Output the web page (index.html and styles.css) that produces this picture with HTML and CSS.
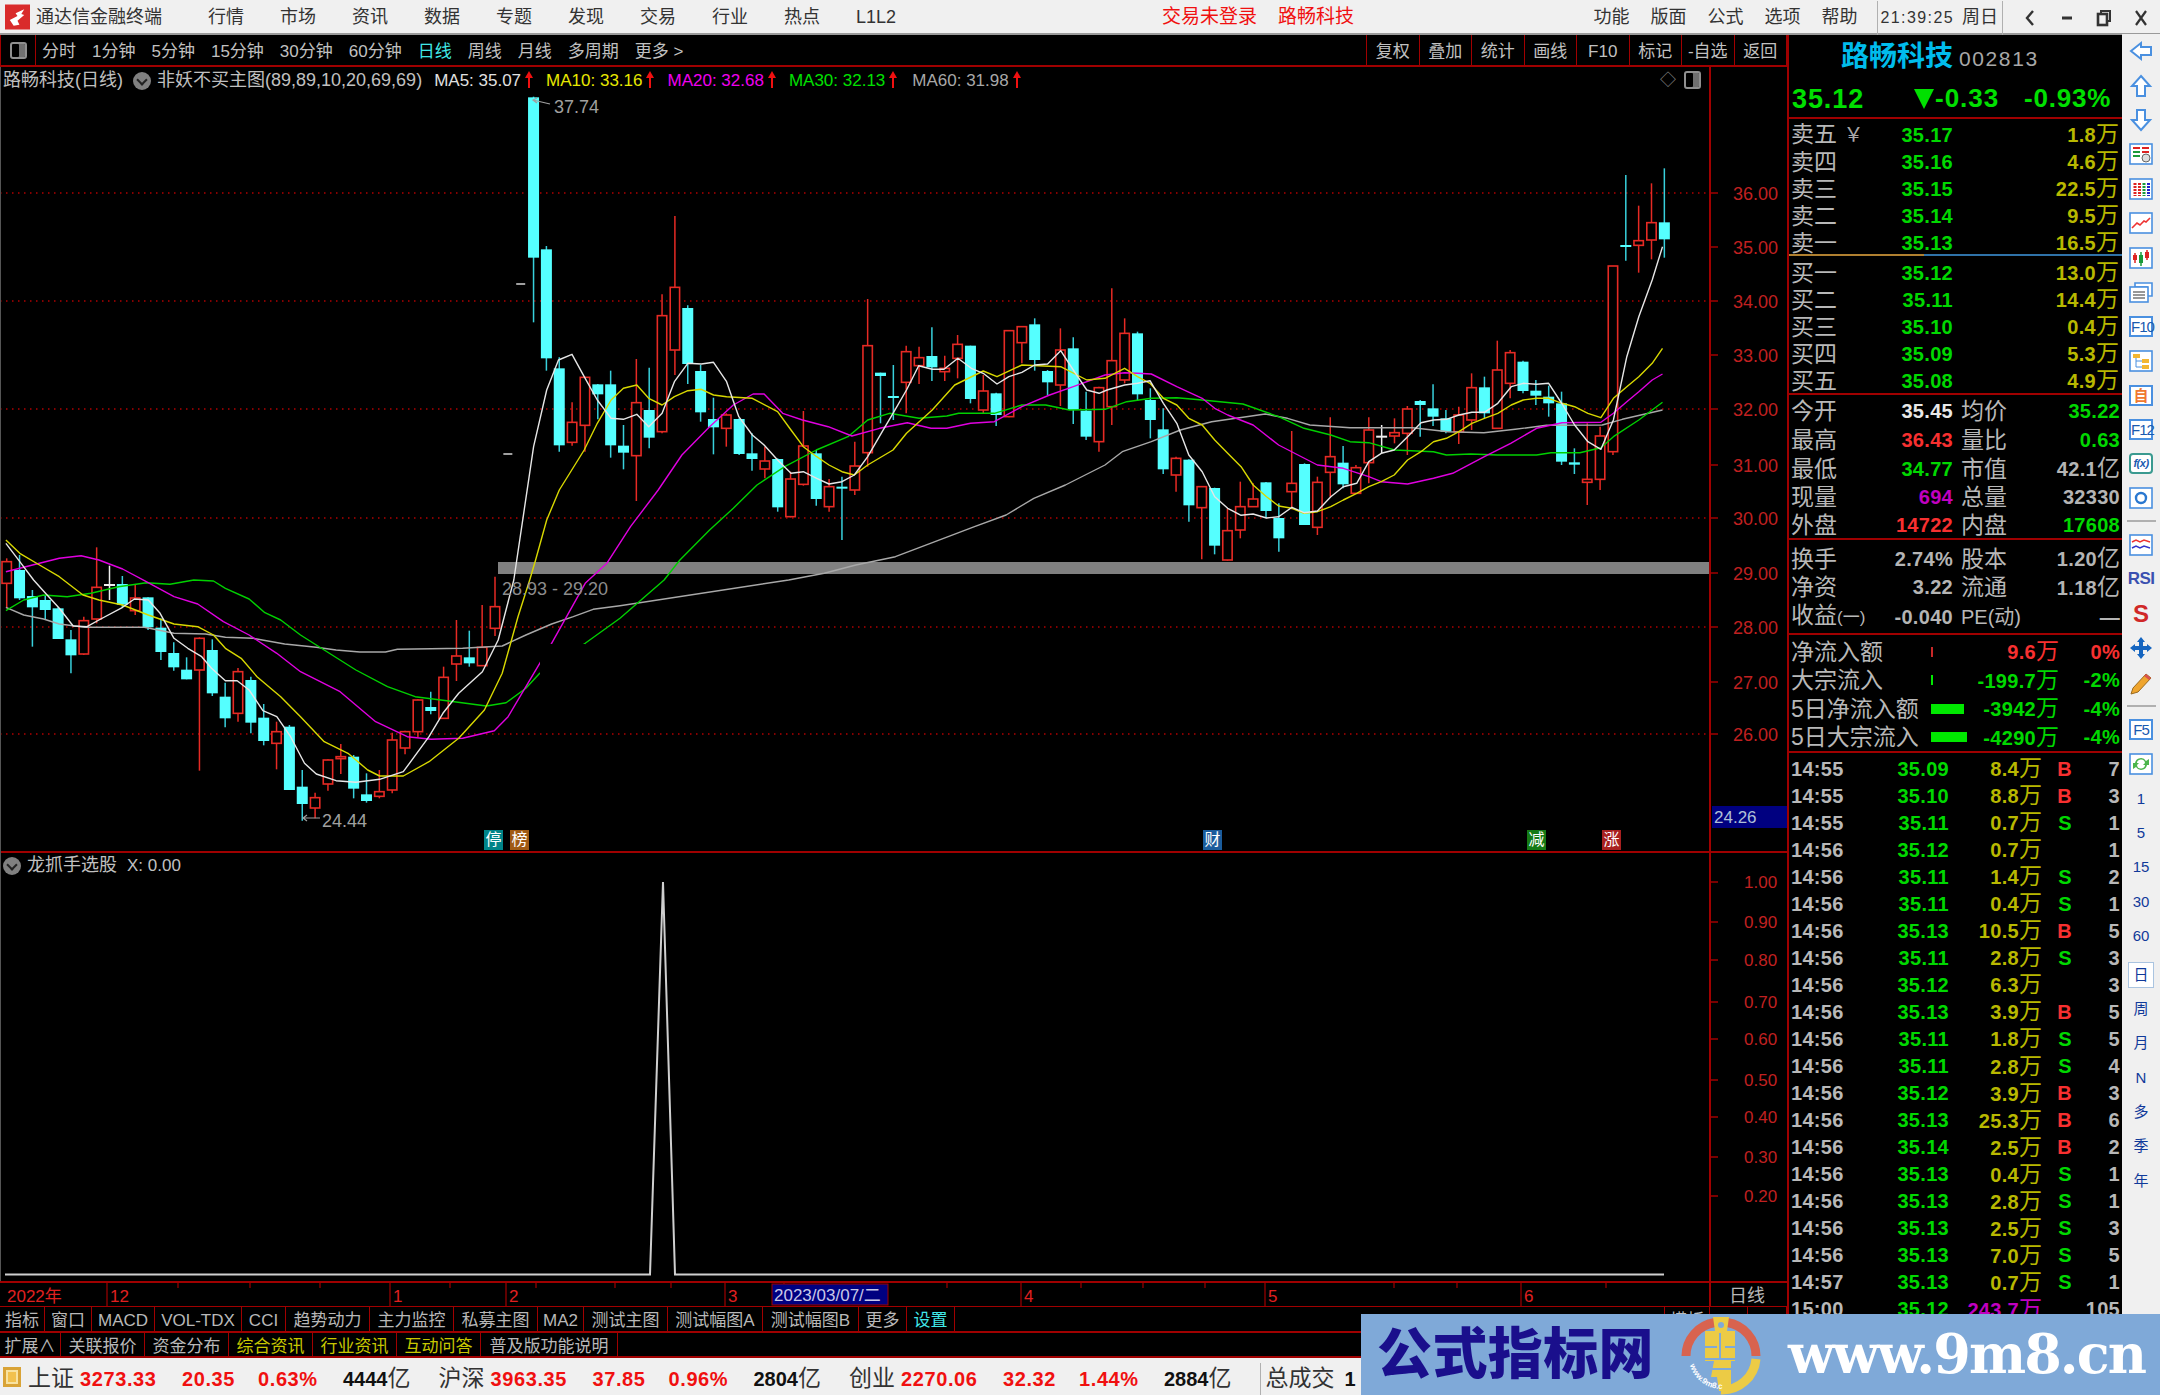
FILE: index.html
```html
<!DOCTYPE html>
<html lang="zh-CN">
<head>
    <meta charset="UTF-8">
    <title>通达信金融终端</title>
    <link rel="stylesheet" href="styles.css">
</head>
<body>
    <!-- title bar -->
    <header class="titlebar">
        <svg class="app-logo" viewBox="0 0 26 26">
            <rect width="26" height="26" fill="#d92b2b"/>
            <path d="M20 5 L11 9 L13 12 L5 16 L9 22 L15 21 L13 17 L20 11 L17 10 Z" fill="#fff"/>
        </svg>
        <span class="app-name">通达信金融终端</span>
        <nav class="menu">
            <span>行情</span><span>市场</span><span>资讯</span><span>数据</span><span>专题</span>
            <span>发现</span><span>交易</span><span>行业</span><span>热点</span><span>L1L2</span>
        </nav>
        <div class="title-red"><span>交易未登录</span><span>路畅科技</span></div>
        <nav class="menu-right">
            <span>功能</span><span>版面</span><span>公式</span><span>选项</span><span>帮助</span>
        </nav>
        <div class="clock"><span class="clock-time">21:39:25</span><span>周日</span></div>
        <div class="win-btns">
            <svg viewBox="0 0 16 20"><path d="M11 3 L5 10 L11 17" fill="none" stroke="#333" stroke-width="2.4"/></svg>
            <svg viewBox="0 0 16 20"><path d="M3 10 H13" stroke="#333" stroke-width="3"/></svg>
            <svg viewBox="0 0 16 20"><path d="M5 6 V3 H14 V13 H11" fill="none" stroke="#333" stroke-width="2"/><rect x="2" y="6" width="9" height="11" fill="none" stroke="#333" stroke-width="2.6"/></svg>
            <svg viewBox="0 0 16 20"><path d="M3 3 L13 17 M13 3 L3 17" stroke="#333" stroke-width="2.2"/></svg>
        </div>
    </header>

    <div class="main">
        <section class="chart-col">
            <div class="toolbar">
                <div class="tb-toggle"><span class="panel-ico"></span></div>
                <div class="tb-items">
                    <span>分时</span><span>1分钟</span><span>5分钟</span><span>15分钟</span><span>30分钟</span><span>60分钟</span>
                    <span class="is-active">日线</span><span>周线</span><span>月线</span><span>多周期</span><span>更多 &gt;</span>
                </div>
                <div class="tb-btns">
                    <span>复权</span><span>叠加</span><span>统计</span><span>画线</span><span>F10</span><span>标记</span><span>-自选</span><span>返回</span>
                </div>
            </div>

            <div class="chart-area">
                <svg id="chart" class="chart-svg" viewBox="0 67 1787 1239"></svg>

                <div class="info-line">
                    <span>路畅科技(日线)</span>
                    <span class="drop-ico"></span>
                    <span>非妖不买主图(89,89,10,20,69,69)</span>
                    <span class="ma ma5">MA5: 35.07<i></i></span>
                    <span class="ma ma10">MA10: 33.16<i></i></span>
                    <span class="ma ma20">MA20: 32.68<i></i></span>
                    <span class="ma ma30">MA30: 32.13<i></i></span>
                    <span class="ma ma60">MA60: 31.98<i></i></span>
                </div>
                <div class="info-tools"><span class="diamond">◇</span><span class="panel-ico"></span></div>

                <div class="sub-line">
                    <span class="drop-ico"></span><span>龙抓手选股</span><span>X: 0.00</span>
                </div>

                <span class="flag flag-ting">停</span>
                <span class="flag flag-bang">榜</span>
                <span class="flag flag-cai">财</span>
                <span class="flag flag-jian">减</span>
                <span class="flag flag-zhang">涨</span>
            </div>

            <div class="tabs tabs-one">
                <span class="w45">指标</span><span class="w47">窗口</span><span class="w63">MACD</span><span class="w87">VOL-TDX</span>
                <span class="w44">CCI</span><span class="w84">趋势动力</span><span class="w84">主力监控</span><span class="w84">私募主图</span>
                <span class="w46">MA2</span><span class="w84">测试主图</span><span class="w95">测试幅图A</span><span class="w96">测试幅图B</span>
                <span class="w48">更多</span><span class="w48 is-cyan">设置</span>
                <span class="w46 tab-end">模板</span><span class="w38">+</span><span class="w39"></span>
            </div>
            <div class="tabs tabs-two">
                <span class="w60">扩展∧</span><span class="w84">关联报价</span><span class="w84">资金分布</span>
                <span class="w84 is-yellow">综合资讯</span><span class="w84 is-yellow">行业资讯</span><span class="w84 is-yellow">互动问答</span>
                <span class="w137">普及版功能说明</span>
            </div>
        </section>

        <!-- quote panel -->
        <aside class="quote">
            <div class="q-name"><span class="stock-name">路畅科技</span><span class="stock-code">002813</span></div>
            <div class="q-price">
                <span class="last">35.12</span>
                <span class="chg"><i class="tri"></i>-0.33</span>
                <span class="pct">-0.93%</span>
            </div>

            <div class="book book-sell">
                <div><span class="lb">卖五 <em>￥</em></span><span class="gr">35.17</span><span class="ol">1.8<u>万</u></span></div>
                <div><span class="lb">卖四</span><span class="gr">35.16</span><span class="ol">4.6<u>万</u></span></div>
                <div><span class="lb">卖三</span><span class="gr">35.15</span><span class="ol">22.5<u>万</u></span></div>
                <div><span class="lb">卖二</span><span class="gr">35.14</span><span class="ol">9.5<u>万</u></span></div>
                <div><span class="lb">卖一</span><span class="gr">35.13</span><span class="ol">16.5<u>万</u></span></div>
            </div>
            <div class="book-mid"></div>
            <div class="book book-buy">
                <div><span class="lb">买一</span><span class="gr">35.12</span><span class="ol">13.0<u>万</u></span></div>
                <div><span class="lb">买二</span><span class="gr">35.11</span><span class="ol">14.4<u>万</u></span></div>
                <div><span class="lb">买三</span><span class="gr">35.10</span><span class="ol">0.4<u>万</u></span></div>
                <div><span class="lb">买四</span><span class="gr">35.09</span><span class="ol">5.3<u>万</u></span></div>
                <div><span class="lb">买五</span><span class="gr">35.08</span><span class="ol">4.9<u>万</u></span></div>
            </div>

            <div class="stats stats-a">
                <div><span class="lb">今开</span><span class="wh">35.45</span><span class="lb2">均价</span><span class="gr">35.22</span></div>
                <div><span class="lb">最高</span><span class="rd">36.43</span><span class="lb2">量比</span><span class="gr">0.63</span></div>
                <div><span class="lb">最低</span><span class="gr">34.77</span><span class="lb2">市值</span><span class="gy">42.1<u>亿</u></span></div>
                <div><span class="lb">现量</span><span class="mg">694</span><span class="lb2">总量</span><span class="gy">32330</span></div>
                <div><span class="lb">外盘</span><span class="rd">14722</span><span class="lb2">内盘</span><span class="gr">17608</span></div>
            </div>
            <div class="stats stats-b">
                <div><span class="lb">换手</span><span class="gy">2.74%</span><span class="lb2">股本</span><span class="gy">1.20<u>亿</u></span></div>
                <div><span class="lb">净资</span><span class="gy">3.22</span><span class="lb2">流通</span><span class="gy">1.18<u>亿</u></span></div>
                <div><span class="lb">收益<small>(一)</small></span><span class="gy">-0.040</span><span class="lb2 lb-pe">PE(动)</span><span class="gy">—</span></div>
            </div>

            <div class="flows">
                <div><span class="lb">净流入额</span><span class="bar"><i class="bar-red" style="width:2px"></i></span><span class="rd">9.6<u>万</u></span><span class="rd">0%</span></div>
                <div><span class="lb">大宗流入</span><span class="bar"><i class="bar-green" style="width:2px"></i></span><span class="gr">-199.7<u>万</u></span><span class="gr">-2%</span></div>
                <div><span class="lb">5日净流入额</span><span class="bar"><i class="bar-green" style="width:33px"></i></span><span class="gr">-3942<u>万</u></span><span class="gr">-4%</span></div>
                <div><span class="lb">5日大宗流入</span><span class="bar"><i class="bar-green" style="width:36px"></i></span><span class="gr">-4290<u>万</u></span><span class="gr">-4%</span></div>
            </div>

            <div class="ticks">
                <div><span>14:55</span><span class="gr">35.09</span><span class="ol">8.4<u>万</u></span><span class="rd">B</span><span>7</span></div>
                <div><span>14:55</span><span class="gr">35.10</span><span class="ol">8.8<u>万</u></span><span class="rd">B</span><span>3</span></div>
                <div><span>14:55</span><span class="gr">35.11</span><span class="ol">0.7<u>万</u></span><span class="gr">S</span><span>1</span></div>
                <div><span>14:56</span><span class="gr">35.12</span><span class="ol">0.7<u>万</u></span><span></span><span>1</span></div>
                <div><span>14:56</span><span class="gr">35.11</span><span class="ol">1.4<u>万</u></span><span class="gr">S</span><span>2</span></div>
                <div><span>14:56</span><span class="gr">35.11</span><span class="ol">0.4<u>万</u></span><span class="gr">S</span><span>1</span></div>
                <div><span>14:56</span><span class="gr">35.13</span><span class="ol">10.5<u>万</u></span><span class="rd">B</span><span>5</span></div>
                <div><span>14:56</span><span class="gr">35.11</span><span class="ol">2.8<u>万</u></span><span class="gr">S</span><span>3</span></div>
                <div><span>14:56</span><span class="gr">35.12</span><span class="ol">6.3<u>万</u></span><span></span><span>3</span></div>
                <div><span>14:56</span><span class="gr">35.13</span><span class="ol">3.9<u>万</u></span><span class="rd">B</span><span>5</span></div>
                <div><span>14:56</span><span class="gr">35.11</span><span class="ol">1.8<u>万</u></span><span class="gr">S</span><span>5</span></div>
                <div><span>14:56</span><span class="gr">35.11</span><span class="ol">2.8<u>万</u></span><span class="gr">S</span><span>4</span></div>
                <div><span>14:56</span><span class="gr">35.12</span><span class="ol">3.9<u>万</u></span><span class="rd">B</span><span>3</span></div>
                <div><span>14:56</span><span class="gr">35.13</span><span class="ol">25.3<u>万</u></span><span class="rd">B</span><span>6</span></div>
                <div><span>14:56</span><span class="gr">35.14</span><span class="ol">2.5<u>万</u></span><span class="rd">B</span><span>2</span></div>
                <div><span>14:56</span><span class="gr">35.13</span><span class="ol">0.4<u>万</u></span><span class="gr">S</span><span>1</span></div>
                <div><span>14:56</span><span class="gr">35.13</span><span class="ol">2.8<u>万</u></span><span class="gr">S</span><span>1</span></div>
                <div><span>14:56</span><span class="gr">35.13</span><span class="ol">2.5<u>万</u></span><span class="gr">S</span><span>3</span></div>
                <div><span>14:56</span><span class="gr">35.13</span><span class="ol">7.0<u>万</u></span><span class="gr">S</span><span>5</span></div>
                <div><span>14:57</span><span class="gr">35.13</span><span class="ol">0.7<u>万</u></span><span class="gr">S</span><span>1</span></div>
                <div><span>15:00</span><span class="gr">35.12</span><span class="mg">243.7<u>万</u></span><span></span><span>105</span></div>
            </div>
        </aside>

        <!-- right icon strip -->
        <aside class="side">
            <div class="side-item"><svg viewBox="0 0 24 24"><path d="M2 12 L12 4 V8 H22 V16 H12 V20 Z" class="ol-ico"/></svg></div>
            <div class="side-item"><svg viewBox="0 0 24 24"><path d="M12 2 L21 12 H16 V22 H8 V12 H3 Z" class="ol-ico"/></svg></div>
            <div class="side-item"><svg viewBox="0 0 24 24"><path d="M12 22 L21 12 H16 V2 H8 V12 H3 Z" class="ol-ico"/></svg></div>
            <div class="side-item"><svg viewBox="0 0 24 24"><rect x="1" y="2" width="22" height="20" class="box-ico"/><path d="M4 6 H11 M13 6 H20 M13 10 H20" stroke="#d22" stroke-width="2"/><path d="M4 10 H11 M4 14 H11" stroke="#1a9a3a" stroke-width="2"/><circle cx="17" cy="16" r="4" fill="#ddd" stroke="#666"/></svg></div>
            <div class="side-item"><svg viewBox="0 0 24 24"><rect x="1" y="2" width="22" height="20" class="box-ico"/><path d="M6 6 V19" stroke="#d22" stroke-width="3" stroke-dasharray="2 1"/><path d="M10.500 6 V19" stroke="#d22" stroke-width="3" stroke-dasharray="2 1"/><path d="M15 6 V19" stroke="#1a9a3a" stroke-width="3" stroke-dasharray="2 1"/><path d="M19.500 6 V19" stroke="#22c" stroke-width="3" stroke-dasharray="2 1"/></svg></div>
            <div class="side-item"><svg viewBox="0 0 24 24"><rect x="1" y="2" width="22" height="20" class="box-ico"/><path d="M3 17 L8 12 L11 14 L15 10 L17 11 L21 7" fill="none" stroke="#e33" stroke-width="1.600"/></svg></div>
            <div class="side-item"><svg viewBox="0 0 24 24"><rect x="1" y="2" width="22" height="20" class="box-ico"/><path d="M6 7 V17 M18 4 V14" stroke="#d22" stroke-width="1.500"/><path d="M12 6 V20" stroke="#1a9a3a" stroke-width="1.500"/><rect x="4" y="9" width="4" height="5" fill="#d22"/><rect x="10" y="9" width="4" height="8" fill="#1a9a3a"/><rect x="16" y="6" width="4" height="6" fill="#d22"/></svg></div>
            <div class="side-item"><svg viewBox="0 0 24 24"><path d="M6 3 H23 V16 H18 V7 H6 Z" class="box-ico"/><rect x="1" y="7" width="18" height="15" class="box-ico"/><path d="M4 12 H16 M4 15 H16 M4 18 H16" stroke="#777" stroke-width="1.600"/></svg></div>
            <div class="side-item"><span class="side-box">F10</span></div>
            <div class="side-item"><svg viewBox="0 0 24 24"><rect x="1" y="2" width="22" height="20" class="box-ico"/><rect x="4" y="5" width="7" height="4" fill="#f2b632"/><rect x="13" y="10" width="7" height="4" fill="#f2b632"/><rect x="13" y="16" width="7" height="4" fill="#f2b632"/><path d="M7 9 V18 H13 M7 12 H13" fill="none" stroke="#4a90e0"/></svg></div>
            <div class="side-item"><span class="side-box side-box-orange">自</span></div>
            <div class="side-item"><span class="side-box">F12</span></div>
            <div class="side-item"><span class="side-box side-box-green">f(x)</span></div>
            <div class="side-item"><svg viewBox="0 0 24 24"><rect x="1" y="2" width="22" height="20" class="box-ico"/><circle cx="12" cy="12" r="5" fill="none" stroke="#2a78d0" stroke-width="2.400"/></svg></div>
            <div class="side-sep"></div>
            <div class="side-item"><svg viewBox="0 0 24 24"><rect x="1" y="2" width="22" height="20" class="box-ico"/><path d="M3 9 L7 7 L11 9 L15 7 L21 9" fill="none" stroke="#e33" stroke-width="1.500"/><path d="M3 15 L7 13 L11 15 L15 13 L21 15" fill="none" stroke="#33c" stroke-width="1.500"/></svg></div>
            <div class="side-item"><span class="side-rsi">RSI</span></div>
            <div class="side-item"><span class="side-s">S</span></div>
            <div class="side-item"><svg viewBox="0 0 24 24"><path d="M12 1 L16 6 H14 V10 H18 V8 L23 12 L18 16 V14 H14 V18 H16 L12 23 L8 18 H10 V14 H6 V16 L1 12 L6 8 V10 H10 V6 H8 Z" fill="#1565c0"/></svg></div>
            <div class="side-item"><svg viewBox="0 0 24 24"><path d="M4 17 L17 3 L22 7 L9 21 L2 23 Z" fill="#efa52e" stroke="#9a6a20"/><path d="M17 3 L22 7 L20 9 L15 5 Z" fill="#d9534f"/></svg></div>
            <div class="side-sep"></div>
            <div class="side-item"><span class="side-box">F5</span></div>
            <div class="side-item"><svg viewBox="0 0 24 24"><rect x="1" y="2" width="22" height="20" class="box-ico"/><path d="M6 11 A6 6 0 0 1 17 9 L20 7 V13 H14 L16 11 A4 4 0 0 0 8 12 Z" fill="#4bb54b"/><path d="M18 13 A6 6 0 0 1 7 15 L4 17 V11 H10 L8 13 A4 4 0 0 0 16 12 Z" fill="#4bb54b"/></svg></div>
            <div class="side-item side-num">1</div>
            <div class="side-item side-num">5</div>
            <div class="side-item side-num">15</div>
            <div class="side-item side-num">30</div>
            <div class="side-item side-num">60</div>
            <div class="side-gap"></div>
            <div class="side-item side-num"><span class="side-on">日</span></div>
            <div class="side-item side-num">周</div>
            <div class="side-item side-num">月</div>
            <div class="side-item side-num">N</div>
            <div class="side-item side-num">多</div>
            <div class="side-item side-num">季</div>
            <div class="side-item side-num">年</div>
        </aside>
    </div>

    <!-- index ticker -->
    <footer class="status">
        <span class="status-ico"></span>
        <div class="idx"><span class="idx-name">上证</span><span class="idx-val">3273.33</span><span class="idx-chg">20.35</span><span class="idx-pct">0.63%</span><span class="idx-amt">4444<u>亿</u></span></div>
        <div class="idx"><span class="idx-name">沪深</span><span class="idx-val">3963.35</span><span class="idx-chg">37.85</span><span class="idx-pct">0.96%</span><span class="idx-amt">2804<u>亿</u></span></div>
        <div class="idx"><span class="idx-name">创业</span><span class="idx-val">2270.06</span><span class="idx-chg">32.32</span><span class="idx-pct">1.44%</span><span class="idx-amt">2884<u>亿</u></span></div>
        <div class="total"><span class="idx-name">总成交</span> <span class="idx-amt">1</span></div>
    </footer>

    <!-- site stamp over the corner -->
    <div class="stamp">
        <span class="stamp-cn">公式指标网</span>
        <svg class="stamp-logo" viewBox="0 0 80 80">
            <path id="stampArc" d="M9 50 A33 33 0 0 0 40 74" fill="none"/>
            <path d="M5 41 A34 34 0 0 1 34 7.500" fill="none" stroke="#d8634f" stroke-width="9"/>
            <path d="M46 7.500 A34 34 0 0 1 75 41" fill="none" stroke="#d8634f" stroke-width="9"/>
            <path d="M75 44 A34 34 0 0 1 40 75" fill="none" stroke="#eccb45" stroke-width="9"/>
            <path d="M32 2 H48 L46 16 H54 V46 H50 V76 H38 L36 62 H30 L33 46 H24 V16 H34 Z" fill="#eccb45"/>
            <circle cx="40" cy="10" r="3" fill="#7fa9d8"/>
            <path d="M24 32 H36 M44 32 H54 M24 44 H54 M28 54 H50 M39 18 V44" stroke="#7fa9d8" stroke-width="2"/>
            <text class="stamp-arc-text"><textPath href="#stampArc">www.9m8.cn</textPath></text>
        </svg>
        <span class="stamp-url">www.9m8.cn</span>
    </div>

    <script src="chart.js"></script>
</body>
</html>
```

FILE: styles.css
```css
* { box-sizing: border-box; }
html, body { margin: 0; padding: 0; }
body { width: 2160px; height: 1395px; overflow: hidden; position: relative; background: #000; color: #c0c0c0;
    font-family: "Liberation Sans", "Noto Sans CJK SC", sans-serif; font-size: 17px; line-height: 1.2; display: flex; flex-direction: column; }
i, em, u { font-style: normal; text-decoration: none; }

/* title bar */
.titlebar { height: 35px; flex: none; display: flex; align-items: center; background: #f0f0f0; color: #333; border-bottom: 2px solid #9a9a9a; font-size: 18px; padding: 2px 0 0 5px; }
.app-logo { width: 25px; height: 26px; margin-top: -2px; }
.app-name { margin-left: 6px; width: 172px; white-space: nowrap; }
.menu { display: flex; gap: 36px; align-items: center; }
.menu span { min-width: 36px; }
.title-red { margin-left: 266px; display: flex; gap: 21px; color: #f01010; font-size: 19px; }
.menu-right { margin-left: auto; display: flex; gap: 21px; }
.clock { display: flex; gap: 8px; align-items: center; height: 34px; margin-left: 19px; padding: 0 4px 0 3px; border-left: 1px solid #b0b0b0; border-right: 1px solid #b0b0b0; }
.clock-time { font-size: 16px; letter-spacing: 1.400px; }
.win-btns { display: flex; gap: 21px; padding: 0 11px 0 19px; }
.win-btns svg { width: 16px; height: 20px; }

.main { display: flex; flex: none; height: 1323px; }
.chart-col { width: 1787px; flex: none; display: flex; flex-direction: column; }

/* period toolbar */
.toolbar { height: 32px; flex: none; display: flex; align-items: center; border-bottom: 2px solid #a00000; }
.tb-toggle { width: 36px; height: 30px; display: flex; align-items: center; justify-content: center; border-right: 1px solid #a00000; border-left: 1px solid #a00000; }
.panel-ico { display: inline-block; width: 17px; height: 17px; border: 2px solid #909090; border-radius: 3px; box-shadow: inset -6px 0 0 #707070; }
.tb-items { display: flex; gap: 16px; padding: 4px 0 0 6px; white-space: nowrap; }
.tb-items .is-active { color: #40e8e8; }
.tb-btns { margin-left: auto; display: flex; height: 30px; border-right: 1px solid #a00000; }
.tb-btns span { width: 52.500px; display: flex; align-items: center; justify-content: center; border-left: 1px solid #a00000; padding-top: 4px; }

/* chart area */
.chart-area { position: relative; height: 1239px; flex: none; }
.chart-svg { display: block; width: 1787px; height: 1239px; font-family: "Liberation Sans", "Noto Sans CJK SC", sans-serif; }
.info-line { position: absolute; left: 3px; top: 1px; height: 26px; display: flex; align-items: center; white-space: nowrap; font-size: 18px; }
.drop-ico { display: inline-block; width: 18px; height: 18px; border-radius: 50%; background: #808080; position: relative; flex: none; }
.drop-ico::after { content: ""; position: absolute; left: 5px; top: 4px; width: 6px; height: 6px; border-right: 2px solid #222; border-bottom: 2px solid #222; transform: rotate(45deg); }
.info-line .drop-ico { margin: 0 6px 0 10px; }
.ma { margin-left: 16px; font-size: 17px; display: flex; align-items: center; }
.ma i { display: block; position: relative; width: 2px; height: 14px; margin-left: 7px; background: #f01010; }
.ma i::before { content: ""; position: absolute; left: -3px; top: -3px; border-left: 4px solid transparent; border-right: 4px solid transparent; border-bottom: 7px solid #f01010; }
.ma5 { color: #e0e0e0; margin-left: 12px; }
.ma10 { color: #e8e800; }
.ma20 { color: #f000f0; }
.ma30 { color: #00e000; }
.ma60 { color: #a8a8a8; margin-left: 18px; }
.info-tools { position: absolute; left: 1660px; top: 3px; display: flex; align-items: center; gap: 8px; color: #888; font-size: 16px; }
.info-tools .panel-ico { width: 17px; height: 18px; }
.sub-line { position: absolute; left: 3px; top: 788px; display: flex; align-items: center; gap: 6px; color: #c0c0c0; font-size: 18px; }
.sub-line span:last-child { margin-left: 4px; font-size: 17px; }
.flag { position: absolute; top: 763px; width: 19px; height: 20px; color: #fff; font-size: 16px; line-height: 20px; text-align: center; }
.flag-ting { left: 484px; background: #008488; }
.flag-bang { left: 510px; background: #a05a14; }
.flag-cai { left: 1203px; background: #1a5c9c; }
.flag-jian { left: 1527px; background: #157a15; }
.flag-zhang { left: 1602px; background: #a82020; }

/* bottom tabs */
.tabs { display: flex; flex: none; border-top: 1px solid #a00000; border-bottom: 1px solid #a00000; white-space: nowrap; color: #b8b8b8; }
.tabs-one { height: 26px; font-size: 17px; }
.tabs-two { height: 26px; border-top: 1px solid #a00000; border-bottom: 2px solid #a00000; }
.tabs span { display: flex; align-items: center; justify-content: center; border-right: 1px solid #a00000; flex: none; padding-top: 4px; }
.tabs-two span { padding-top: 5px; }
.tabs .is-cyan { color: #40e8e8; }
.tabs .is-yellow { color: #c8c800; }
.tabs .tab-end { margin-left: auto; border-left: 1px solid #a00000; }
.tabs .w38 { width: 38px; } .tabs .w39 { width: 39px; } .tabs .w44 { width: 44px; } .tabs .w45 { width: 45px; }
.tabs .w46 { width: 46px; } .tabs .w47 { width: 47px; } .tabs .w48 { width: 48px; } .tabs .w60 { width: 61px; }
.tabs .w63 { width: 63px; } .tabs .w84 { width: 84px; } .tabs .w87 { width: 87px; } .tabs .w95 { width: 95px; }
.tabs .w96 { width: 96px; } .tabs .w137 { width: 137px; }

/* quote panel */
.quote { width: 335px; flex: none; border-left: 2px solid #a00000; font-weight: bold; font-size: 20px; letter-spacing: .3px; overflow: hidden; }
.quote .gr { color: #00d800; } .quote .rd { color: #f83030; } .quote .ol { color: #b8b800; }
.quote .wh { color: #e8e8e8; } .quote .gy { color: #b4b4b4; } .quote .mg { color: #c000c0; }
.quote u { font-size: 23px; font-weight: normal; letter-spacing: 0; }
.quote .lb, .quote .lb2 { font-size: 23px; font-weight: normal; color: #b8b8b8; letter-spacing: 0; white-space: nowrap; }
.quote .lb small { font-size: 17px; }
.quote .lb-pe { font-size: 20px; }
.q-name { height: 41px; display: flex; align-items: center; padding: 3px 0 0 52px; gap: 6px; }
.stock-name { font-size: 28px; color: #00bcec; letter-spacing: 0; }
.stock-code { font-size: 21px; font-weight: normal; color: #a8a8a8; letter-spacing: 1.600px; padding-top: 3px; }
.q-price { height: 43px; display: flex; align-items: center; border-bottom: 2px solid #a00000; color: #00e000; font-size: 26px; padding: 5px 4px 0 0; }
.last { margin-left: 3px; width: 122px; font-size: 27px; letter-spacing: .9px; }
.chg { display: flex; align-items: center; width: 110px; letter-spacing: 1px; }
.tri { width: 0; height: 0; border-left: 10px solid transparent; border-right: 10px solid transparent; border-top: 20px solid #00e000; margin-right: 1px; }
.pct { letter-spacing: .8px; }
.book div { height: 27px; display: grid; grid-template-columns: 60px 102px 166px; align-items: center; padding: 4px 0 0 2px; text-align: right; line-height: 23px; }
.book .lb { text-align: left; }
.book em { font-size: 20px; color: #a8a8a8; }
.book-mid { height: 2px; background: linear-gradient(to right, #b08030 135px, #2f72a8 135px); }
.book-buy { height: 139px; padding-top: 1px; border-bottom: 2px solid #a00000; }
.stats div { height: 28.500px; display: grid; grid-template-columns: 60px 102px 68px 99px; align-items: center; padding: 4px 0 0 2px; text-align: right; line-height: 24px; }
.stats .lb, .stats .lb2 { text-align: left; }
.stats .lb2 { padding-left: 8px; }
.stats-a { border-bottom: 2px solid #a00000; height: 145px; }
.stats-b { height: 95px; padding-top: 2px; border-bottom: 2px solid #a00000; }
.flows { height: 118px; border-bottom: 2px solid #a00000; }
.flows div { height: 28.600px; display: grid; grid-template-columns: 138px 42px 88px 61px; align-items: center; padding: 4px 0 0 2px; text-align: right; line-height: 24px; }
.flows .lb { text-align: left; letter-spacing: 0; }
.bar { display: flex; padding-left: 2px; height: 10px; }
.bar i { display: block; height: 10px; }
.bar-red { background: #c82828; height: 12px; }
.bar-green { background: #00e800; }
.ticks div { height: 27.050px; display: grid; grid-template-columns: 60px 98px 93px 30px 48px; align-items: center; padding: 4px 0 0 2px; text-align: right; color: #b8b8b8; line-height: 23px; }
.ticks div > span:first-child { text-align: left; }

/* icon strip */
.side { width: 38px; flex: none; background: #f0f0f0; display: flex; flex-direction: column; align-items: center; padding-top: 0; margin-top: -1px; }
.side-item { height: 34.400px; width: 100%; flex: none; display: flex; align-items: center; justify-content: center; }
.side-item svg { width: 24px; height: 24px; }
.ol-ico { fill: #fff; stroke: #4a90e0; stroke-width: 2; }
.box-ico { fill: #fff; stroke: #4a90e0; stroke-width: 1.600; }
.side-sep { width: 29px; height: 12.600px; flex: none; position: relative; }
.side-sep::after { content: ""; position: absolute; left: 0; right: 0; top: 5px; height: 2px; background: #b0b0b0; }
.side-gap { height: 4px; flex: none; }
.side-box { width: 24px; height: 21px; background: #fff; border: 2px solid #4a90e0; color: #1a5ab0; font-size: 15px; line-height: 17px; text-align: center; letter-spacing: -1px; }
.side-box-orange { color: #f07830; font-size: 15px; font-weight: bold; letter-spacing: 0; }
.side-box-green { border-color: #3a9a90; font-style: italic; font-size: 11px; border-radius: 4px; font-weight: bold; letter-spacing: -.5px; }
.side-rsi { color: #3a50b0; font-weight: bold; font-size: 17px; letter-spacing: -.6px; }
.side-s { color: #d02828; font-weight: bold; font-size: 24px; }
.side-num { color: #103a9a; font-size: 15px; }
.side-on { display: block; width: 26px; height: 26px; line-height: 24px; text-align: center; background: #fff; border: 1px solid #aac4e0; }

/* ticker */
.status { height: 37px; flex: none; display: flex; align-items: center; background: #f0f0f0; color: #222; padding: 4px 0 0 3px; overflow: hidden; }
.status-ico { width: 18px; height: 20px; margin: -3px 7px 0 0; background: #f2c14e; border: 3px solid #d9a336; box-shadow: inset 0 0 0 2px #f8e2a0; flex: none; }
.idx { display: flex; width: 410.500px; flex: none; align-items: center; white-space: nowrap; }
.idx-name { width: 52px; font-size: 23px; color: #333; flex: none; }
.idx-val, .idx-chg, .idx-pct { color: #f01010; font-weight: bold; font-size: 20px; letter-spacing: .6px; flex: none; }
.idx-val { width: 102px; }
.idx-chg { width: 76px; }
.idx-pct { width: 85px; }
.idx-amt { font-weight: bold; font-size: 20px; color: #111; }
.idx-amt u { font-size: 23px; font-weight: normal; color: #333; }
.total { display: flex; align-items: center; gap: 10px; border-left: 1px solid #b0b0b0; padding-left: 5px; height: 32px; margin-left: 0; white-space: nowrap; }
.total .idx-name { width: auto; }

/* site stamp */
.stamp { position: absolute; left: 1361px; top: 1314px; width: 799px; height: 81px; background: #7fa9d8; display: flex; align-items: center; padding-left: 16px; }
.stamp-cn { color: #1a0f8c; font-size: 55px; font-weight: 900; width: 304px; letter-spacing: .4px; line-height: 81px; flex: none; }
.stamp-logo { width: 80px; height: 80px; flex: none; }
.stamp-arc-text { fill: #fff; font-size: 8px; font-weight: bold; font-family: "Liberation Sans", sans-serif; }
.stamp-url { margin-left: 27px; color: #fff; font-family: "DejaVu Serif", serif; font-weight: bold; font-size: 54px; letter-spacing: -1.900px; white-space: nowrap; }
```

FILE: chart.js
```js
// Daily chart drawn in page pixels (the svg viewBox keeps page coordinates).
const svg = document.getElementById('chart');
const NS = 'http://www.w3.org/2000/svg';

function el(name, attrs, text) {
    const node = document.createElementNS(NS, name);
    for (const key in attrs) node.setAttribute(key, attrs[key]);
    if (text !== undefined) node.textContent = text;
    svg.appendChild(node);
    return node;
}

const RED = '#a00000';
const candleX = i => 6.7 + 12.85 * i;

// candle rows: type, high, body top, body bottom, low. y is measured from a base line per block.
const blocks = [
    { start: 0, base: 520, rows: [
        'r 115 125 190 265', 'c 105 150 235 240', 'c 210 228 262 380', 'c 225 240 270 300', 'c 262 265 357 357',
        'c 330 358 406 460', 'r 290 302 402 405', 'r 82 202 297 310', 'w 137 192 194 240', 'c 168 192 254 262',
        'r 195 234 272 285', 'c 232 232 322 330', 'c 295 323 396 420', 'c 367 399 442 452', 'c 412 449 478 478',
        'r 352 355 450 752', 'c 358 390 520 528', 'c 488 530 595 622', 'r 444 455 580 605', 'c 470 480 608 640',
        'c 552 593 663 676', 'r 605 635 670 748', 'c 615 620 810 810', 'c 750 800 852 902', 'r 818 833 864 895',
        'r 718 720 792 812', 'r 672 710 716 762', 'c 705 710 806 835', 'c 760 823 843 848', 'r 750 815 829 835',
        'r 638 660 810 820', 'r 632 635 684 703', 'r 538 540 635 652', 'c 515 561 573 583', 'r 440 472 595 596',
        'r 300 408 432 483', 'c 332 412 430 440', 'r 255 382 437 438', 'r 170 260 325 348'
    ] },
    { start: 41, base: 80, rows: [
        'c 50 52 533 727', 'c 498 508 835 872', 'c 832 865 1096 1115', 'r 967 1027 1087 1097', 'r 890 892 1036 1115',
        'c 912 913 943 1018', 'c 872 913 1096 1133', 'c 1035 1097 1118 1168', 'r 837 968 1127 1263', 'c 863 990 1073 1105',
        'r 643 707 1055 1060', 'r 408 622 810 885', 'c 676 684 852 912', 'c 855 873 997 1025', 'c 953 1017 1042 1123',
        'r 1000 1005 1045 1100', 'c 1015 1017 1122 1125', 'c 1060 1120 1137 1172', 'r 1100 1143 1167 1195', 'c 1135 1137 1282 1295',
        'r 1175 1197 1310 1312', 'r 993 1098 1213 1217', 'c 1110 1120 1257 1277', 'r 1197 1220 1280 1295', 'c 1190 1220 1226 1380',
        'r 1085 1158 1230 1245', 'r 657 797 1118 1160', 'c 878 878 888 1030', 'c 855 948 952 1020', 'r 797 815 907 1000',
        'r 800 833 857 912', 'c 742 828 862 903', 'r 827 865 875 903', 'r 765 793 835 895', 'c 797 797 957 970',
        'r 885 933 990 1000', 'c 938 940 1005 1038', 'r 750 752 1010 1012', 'r 738 740 788 850', 'c 715 733 840 872',
        'c 870 873 907 945', 'r 745 810 915 978', 'c 772 805 990 1032', 'c 935 992 1070 1080', 'r 920 923 1085 1115'
    ] },
    { start: 86, base: 150, rows: [
        'r 415 632 770 825', 'r 505 550 690 700', 'c 545 550 733 752', 'c 715 750 810 865', 'c 775 838 958 972',
        'r 920 925 975 1025', 'c 928 929 1066 1115', 'r 1010 1010 1073 1228', 'c 1013 1014 1187 1213', 'r 1075 1142 1230 1232',
        'r 995 1070 1140 1165', 'r 1000 1047 1070 1070', 'c 996 997 1083 1105', 'c 1060 1104 1165 1205', 'r 843 1000 1025 1078',
        'c 940 942 1125 1125', 'r 980 997 1132 1155', 'r 802 920 967 1040', 'c 888 938 1003 1015', 'r 945 953 1030 1032',
        'r 802 840 938 1000', 'w 825 857 859 910', 'r 805 848 858 880', 'r 768 777 850 915', 'c 750 753 765 860',
        'c 703 775 800 828', 'c 780 805 845 850', 'r 770 795 845 882', 'r 670 713 810 840', 'c 680 712 790 805',
        'r 572 660 835 835', 'r 600 608 700 745', 'c 632 635 723 730', 'c 690 722 737 765', 'c 707 740 760 800',
        'c 725 760 935 945', 'c 895 937 944 972', 'r 820 988 997 1065', 'r 830 858 988 1020', 'r 348 348 905 915',
        'c 75 285 287 332', 'r 167 272 286 368', 'r 100 218 270 328', 'c 55 217 268 323'
    ] }
];

// MA lines, sampled in three windows of the chart: left, middle, right
const win = { a: { x: 0, y: 520, sx: 2.529 }, b: { x: 500, y: 80, sx: 2.529 }, c: { x: 1100, y: 150, sx: 2.24 } };
const lines = [
    { color: '#a8a8a8', parts: [
        ['a', [15,262,60,285,110,297,150,312,215,322,365,322,440,340,520,342,570,352,640,355,720,372,800,382,850,390,910,396,975,396,1005,388,1090,386,1170,385,1270,378,1330,345,1395,312,1450,290,1500,268,1568,257]],
        ['b', [730,1500,820,1480,900,1455,1000,1430,1100,1385,1200,1340,1280,1305,1350,1255,1430,1215,1530,1155]],
        ['c', [50,905,115,875,180,840,250,815,320,802,370,792,420,805,470,825,560,833,700,833,780,845,860,848,930,838,1000,826,1125,825,1170,808,1260,780]]
    ] },
    { color: '#00d000', parts: [
        ['a', [15,272,60,240,110,225,170,230,230,220,300,200,370,188,430,193,490,180,540,183,570,205,630,237,670,278,710,300,760,345,820,390,900,450,980,500,1050,530,1130,542,1230,558,1280,548,1330,505,1365,460,1480,370,1568,295]],
        ['b', [415,1500,455,1440,530,1350,590,1285,650,1215,720,1160,800,1110,880,1070,930,1020,985,1000,1060,1015,1130,1008,1160,1000,1250,1000,1320,975,1380,975,1440,990,1530,988]],
        ['c', [60,755,115,745,172,743,229,750,320,762,400,800,457,835,517,855,560,875,602,878,660,900,747,905,776,915,830,912,890,915,978,915,1010,908,1075,908,1122,893,1150,860,1207,810,1260,757]]
    ] },
    { color: '#e000e0', parts: [
        ['a', [15,155,50,145,100,130,150,115,205,107,250,120,310,147,370,185,440,230,500,252,565,305,630,345,700,400,760,455,860,515,950,605,1030,650,1090,658,1170,655,1250,632,1285,590,1330,500,1395,370,1480,190]],
        ['b', [270,1450,330,1340,400,1230,460,1125,530,1040,590,975,640,942,668,942,715,1000,765,1020,830,1040,890,1068,960,1045,1030,1028,1090,1045,1130,1045,1190,1030,1250,1025,1320,980,1390,945,1450,920,1530,885]],
        ['c', [55,668,84,670,115,672,172,710,229,745,257,775,286,795,343,825,400,885,487,945,545,955,602,980,630,995,689,1002,747,985,790,970,861,920,920,880,978,835,1035,818,1122,817,1150,790,1180,755,1207,725,1237,690,1260,672]]
    ] },
    { color: '#d8d800', parts: [
        ['a', [15,60,50,100,100,135,150,170,210,225,250,240,310,255,375,285,440,312,500,320,540,345,570,385,610,415,650,470,710,530,760,590,820,665,880,700,930,750,960,768,1020,768,1085,725,1160,655,1225,570,1270,460,1310,290]],
        ['b', [75,1500,90,1440,118,1320,150,1230,213,1110,246,1030,281,960,312,925,346,915,376,955,410,975,441,950,475,932,509,928,540,945,573,950,638,955,702,995,736,1050,767,1100,801,1130,832,1155,865,1175,896,1185,930,1155,994,1110,1028,1060,1093,990,1150,915,1222,873,1257,890,1320,855,1418,860,1484,900,1530,895]],
        ['c', [55,655,84,680,112,700,142,745,172,765,199,805,229,825,257,870,286,910,316,950,343,1005,373,1040,400,1068,430,1075,457,1090,487,1085,517,1070,545,1050,575,1030,602,1010,630,995,659,975,689,930,719,905,747,875,776,865,804,845,833,820,861,805,891,790,921,765,948,750,978,745,1005,745,1035,760,1063,770,1093,790,1122,803,1150,745,1180,710,1207,680,1237,640,1260,595]]
    ] },
    { color: '#e6e6e6', parts: [
        ['a', [15,70,50,125,85,180,115,220,150,265,185,318,220,320,250,300,310,262,340,237,375,240,405,280,440,355,475,385,510,410,535,445,570,482,600,482,630,510,665,572,700,590,735,650,770,730,800,762,850,782,900,787,960,778,1020,755,1085,650,1120,580,1160,520,1220,455,1260,360]],
        ['b', [35,1500,60,1300,85,1100,118,930,148,840,182,823,213,890,246,960,281,1015,312,1018,346,1003,376,1040,410,1000,441,905,475,850,509,852,540,847,573,905,604,1010,638,1065,668,1095,702,1140,736,1180,767,1175,801,1195,832,1212,865,1205,896,1185,930,1130,964,1060,994,1000,1028,930,1059,857,1093,868,1123,868,1158,835,1192,865,1222,880,1257,912,1287,890,1320,877,1352,855,1385,852,1418,812,1450,870,1484,930,1515,940,1535,930]],
        ['c', [55,705,84,700,112,692,142,760,172,820,199,915,229,965,257,1040,286,1075,316,1096,343,1092,373,1104,400,1100,430,1072,457,1088,487,1083,517,1040,545,1010,575,1000,602,935,630,910,659,900,689,860,719,818,747,810,776,808,804,795,833,787,861,787,891,760,921,710,948,700,978,703,1005,700,1035,762,1063,825,1093,875,1122,898,1150,810,1180,620,1207,500,1237,390,1260,290]]
    ] }
];

// even price levels get a dotted grid line
const priceTicks = [[36,193],[35,247],[34,301],[33,355],[32,409],[31,465],[30,518],[29,573],[28,627],[27,682],[26,734]];
priceTicks.filter(t => t[0] % 2 === 0).forEach(t => {
    el('line', { x1: 0, x2: 1710, y1: t[1], y2: t[1], stroke: '#b00000', 'stroke-width': 1.4, 'stroke-dasharray': '1.5 4.5' });
});

// support band
el('rect', { x: 498, y: 562, width: 1212, height: 12, fill: '#808080' });

function drawCandle(x, type, hi, top, bot, lo) {
    const color = type === 'r' ? '#e62a24' : type === 'w' ? '#eeeeee' : '#38d0dc';
    el('line', { x1: x, x2: x, y1: hi, y2: lo, stroke: color, 'stroke-width': 1.5 });
    if (type === 'r') {
        el('rect', { x: x - 4.7, y: top, width: 9.4, height: Math.max(bot - top, 1), fill: '#000', stroke: color, 'stroke-width': 1.6 });
    } else {
        el('rect', { x: x - 5.5, y: top, width: 11, height: Math.max(bot - top, 2), fill: type === 'w' ? '#eeeeee' : '#55ffff' });
    }
}

blocks.forEach(block => {
    block.rows.forEach((row, n) => {
        const p = row.split(' ');
        const y = v => block.base + Number(v) / 3;
        drawCandle(candleX(block.start + n), p[0], y(p[1]), y(p[2]), y(p[3]), y(p[4]));
    });
});

// two limit-up days print as a single dash
[[39, 454], [40, 284]].forEach(d => {
    const x = candleX(d[0]);
    el('line', { x1: x - 4.5, x2: x + 4.5, y1: d[1], y2: d[1], stroke: '#c8c8c8', 'stroke-width': 1.6 });
});

lines.forEach(line => {
    const pts = [];
    line.parts.forEach(part => {
        const w = win[part[0]];
        const raw = part[1];
        for (let i = 0; i < raw.length; i += 2) {
            pts.push((w.x + raw[i] / w.sx).toFixed(1) + ',' + (w.y + raw[i + 1] / 3).toFixed(1));
        }
    });
    el('polyline', { points: pts.join(' '), fill: 'none', stroke: line.color, 'stroke-width': 1.4, 'stroke-linejoin': 'round' });
});

el('rect', { x: 540, y: 644, width: 45, height: 30, fill: '#000' });

const GREY = '#a0a0a0';
el('text', { x: 502, y: 595, fill: '#8c8c8c', 'font-size': 18 }, '28.93 - 29.20');
el('text', { x: 554, y: 113, fill: GREY, 'font-size': 18 }, '37.74');
el('path', { d: 'M550 104 L533 100 M537 98 L533 100 L537 103', fill: 'none', stroke: GREY, 'stroke-width': 1.2 });
el('text', { x: 322, y: 827, fill: GREY, 'font-size': 18 }, '24.44');
el('path', { d: 'M320 818 L303 818 M307 815 L303 818 L307 821', fill: 'none', stroke: GREY, 'stroke-width': 1.2 });

// separators and axis
el('line', { x1: 1710, x2: 1710, y1: 67, y2: 1306, stroke: RED, 'stroke-width': 2 });
el('line', { x1: 0, x2: 1787, y1: 852, y2: 852, stroke: RED, 'stroke-width': 2 });
el('line', { x1: 0.5, x2: 0.5, y1: 67, y2: 1282, stroke: '#555', 'stroke-width': 1 });

priceTicks.forEach(t => {
    el('line', { x1: 1710, x2: 1718, y1: t[1], y2: t[1], stroke: RED, 'stroke-width': 1.5 });
    el('text', { x: 1733, y: t[1] + 7, fill: '#c02020', 'font-size': 18 }, t[0].toFixed(2));
});

el('rect', { x: 1712, y: 806, width: 75, height: 22, fill: '#000080' });
el('text', { x: 1714, y: 823, fill: '#b0c0d8', 'font-size': 17 }, '24.26');

// lower panel
[[1.0, 882], [0.9, 922], [0.8, 960], [0.7, 1002], [0.6, 1039], [0.5, 1080], [0.4, 1117], [0.3, 1157], [0.2, 1196]].forEach(t => {
    el('line', { x1: 1710, x2: 1718, y1: t[1], y2: t[1], stroke: RED, 'stroke-width': 1.5 });
    el('text', { x: 1744, y: t[1] + 6, fill: '#c02020', 'font-size': 17 }, t[0].toFixed(2));
});
el('path', { d: 'M5 1274.500 H650 L663 882 L675 1274.500 H1664', fill: 'none', stroke: '#cfcfcf', 'stroke-width': 2 });

// date row
el('line', { x1: 0, x2: 1787, y1: 1282, y2: 1282, stroke: RED, 'stroke-width': 2 });
[[107, '12'], [390, '1'], [506, '2'], [725, '3'], [1021, '4'], [1265, '5'], [1521, '6']].forEach(d => {
    el('line', { x1: d[0], x2: d[0], y1: 1282, y2: 1306, stroke: RED, 'stroke-width': 1.2 });
    el('text', { x: d[0] + 3, y: 1302, fill: '#e02020', 'font-size': 17 }, d[1]);
});
[178, 250, 320, 450, 536, 615, 671, 784, 947, 1081, 1143, 1205, 1394, 1457, 1606].forEach(x => {
    el('line', { x1: x, x2: x, y1: 1282, y2: 1288, stroke: RED, 'stroke-width': 1.2 });
});
el('text', { x: 7, y: 1302, fill: '#e02020', 'font-size': 17 }, '2022年');
el('rect', { x: 772, y: 1284, width: 116, height: 21, fill: '#000080', stroke: RED });
el('text', { x: 774, y: 1301, fill: '#c8c8e8', 'font-size': 17 }, '2023/03/07/二');
el('text', { x: 1729, y: 1302, fill: '#b8b8b8', 'font-size': 18 }, '日线');
```
